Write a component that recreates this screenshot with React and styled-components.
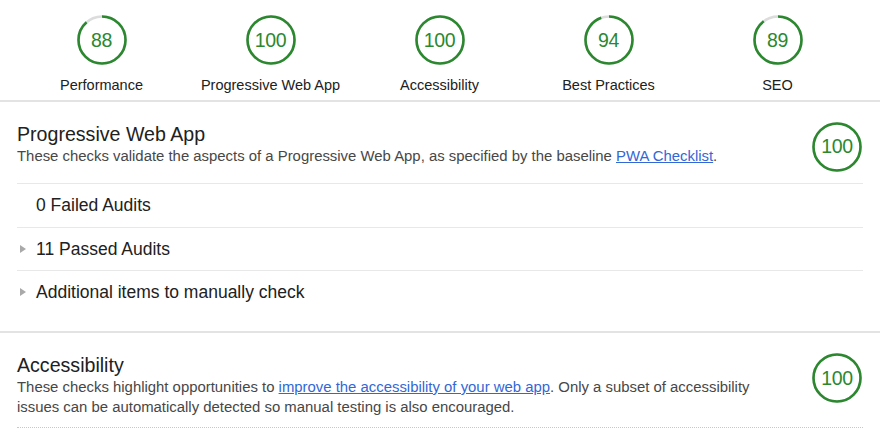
import styled, { createGlobalStyle } from 'styled-components';

const GlobalStyle = createGlobalStyle`
  body {
    margin: 0;
    background: #fff;
    font-family: "Liberation Sans", Arial, sans-serif;
    color: #212121;
  }
`;

const PASS = '#2b882f';

const Page = styled.div`
  width: 880px;
`;

const Summary = styled.div`
  display: grid;
  grid-template-columns: repeat(5, 1fr);
  padding: 14px 18px 6px 17px;
  border-bottom: 2px solid #e3e3e3;
`;

const GaugeItem = styled.div`
  display: flex;
  flex-direction: column;
  align-items: center;
`;

const GaugeBox = styled.div`
  position: relative;
  width: 52px;
  height: 52px;
  flex: none;
  margin-top: ${(p) => p.$offset || 0}px;

  svg {
    display: block;
    transform: rotate(-90deg);
  }
`;

const GaugeValue = styled.span`
  position: absolute;
  inset: 0;
  display: flex;
  align-items: center;
  justify-content: center;
  font-size: 19.5px;
  letter-spacing: -0.3px;
  color: ${PASS};
`;

const GaugeLabel = styled.div`
  margin-top: 10px;
  font-size: 14.5px;
  line-height: 18px;
  color: #212121;
`;

const Gauge = ({ score, offset }) => {
  const r = 23.5;
  const c = 2 * Math.PI * r;
  return (
    <GaugeBox $offset={offset}>
      <svg width="52" height="52" viewBox="0 0 52 52">
        <circle cx="26" cy="26" r={r} fill="none" stroke="#dcdcdc" strokeWidth="2.6" />
        <circle
          cx="26"
          cy="26"
          r={r}
          fill="none"
          stroke={PASS}
          strokeWidth="2.6"
          strokeDasharray={`${(c * score) / 100} ${c}`}
        />
      </svg>
      <GaugeValue>{score}</GaugeValue>
    </GaugeBox>
  );
};

const Section = styled.section`
  padding: 22px 17px 17.5px;
  border-bottom: ${(p) => (p.$last ? 'none' : '2px solid #e3e3e3')};
`;

const SectionHeader = styled.div`
  display: flex;
  align-items: flex-start;
  gap: 30px;
`;

const HeaderText = styled.div`
  flex: 1;
`;

const Title = styled.h2`
  margin: 0;
  font-size: 19.6px;
  font-weight: normal;
  line-height: 21px;
  color: #212121;
`;

const Description = styled.p`
  margin: 1px 0 0;
  font-size: 14.9px;
  line-height: 20px;
  color: #474747;

  a {
    color: #3367d6;
  }
`;

const AuditList = styled.div`
  margin-top: ${(p) => p.$gap}px;
`;

const AuditRow = styled.div`
  display: flex;
  align-items: center;
  padding: 10px 0 10.5px;
  border-top: 1px solid #e8e8e8;
  font-size: 17.5px;
  line-height: 22px;
  color: #212121;
`;

const Toggle = styled.span`
  width: 19px;
  flex: none;
  display: flex;
  padding-left: 3px;
  box-sizing: border-box;
`;

const Arrow = () => (
  <svg width="6" height="8" viewBox="0 0 6 8">
    <path d="M0 0 L6 4 L0 8 Z" fill="#a9a9a9" />
  </svg>
);

const GroupDivider = styled.div`
  margin-top: ${(p) => p.$gap}px;
  border-top: 1px dotted #c8c8c8;
`;

const categories = [
  { name: 'Performance', score: 88 },
  { name: 'Progressive Web App', score: 100 },
  { name: 'Accessibility', score: 100 },
  { name: 'Best Practices', score: 94 },
  { name: 'SEO', score: 89 },
];

const audits = [
  { label: '0 Failed Audits', expandable: false },
  { label: '11 Passed Audits', expandable: true },
  { label: 'Additional items to manually check', expandable: true },
];

export default function App() {
  return (
    <Page>
      <GlobalStyle />
      <Summary>
        {categories.map((cat) => (
          <GaugeItem key={cat.name}>
            <Gauge score={cat.score} />
            <GaugeLabel>{cat.name}</GaugeLabel>
          </GaugeItem>
        ))}
      </Summary>

      <Section>
        <SectionHeader>
          <HeaderText>
            <Title>Progressive Web App</Title>
            <Description>
              These checks validate the aspects of a Progressive Web App, as specified by the
              baseline <a href="#pwa">PWA Checklist</a>.
            </Description>
          </HeaderText>
          <Gauge score={100} offset={-3.5} />
        </SectionHeader>
        <AuditList $gap={10.5}>
          {audits.map((a) => (
            <AuditRow key={a.label}>
              <Toggle>{a.expandable && <Arrow />}</Toggle>
              {a.label}
            </AuditRow>
          ))}
        </AuditList>
      </Section>

      <Section $last>
        <SectionHeader>
          <HeaderText>
            <Title>Accessibility</Title>
            <Description>
              These checks highlight opportunities to{' '}
              <a href="#a11y">improve the accessibility of your web app</a>. Only a subset of
              accessibility issues can be automatically detected so manual testing is also
              encouraged.
            </Description>
          </HeaderText>
          <Gauge score={100} offset={-3} />
        </SectionHeader>
        <GroupDivider $gap={10} />
      </Section>
    </Page>
  );
}
